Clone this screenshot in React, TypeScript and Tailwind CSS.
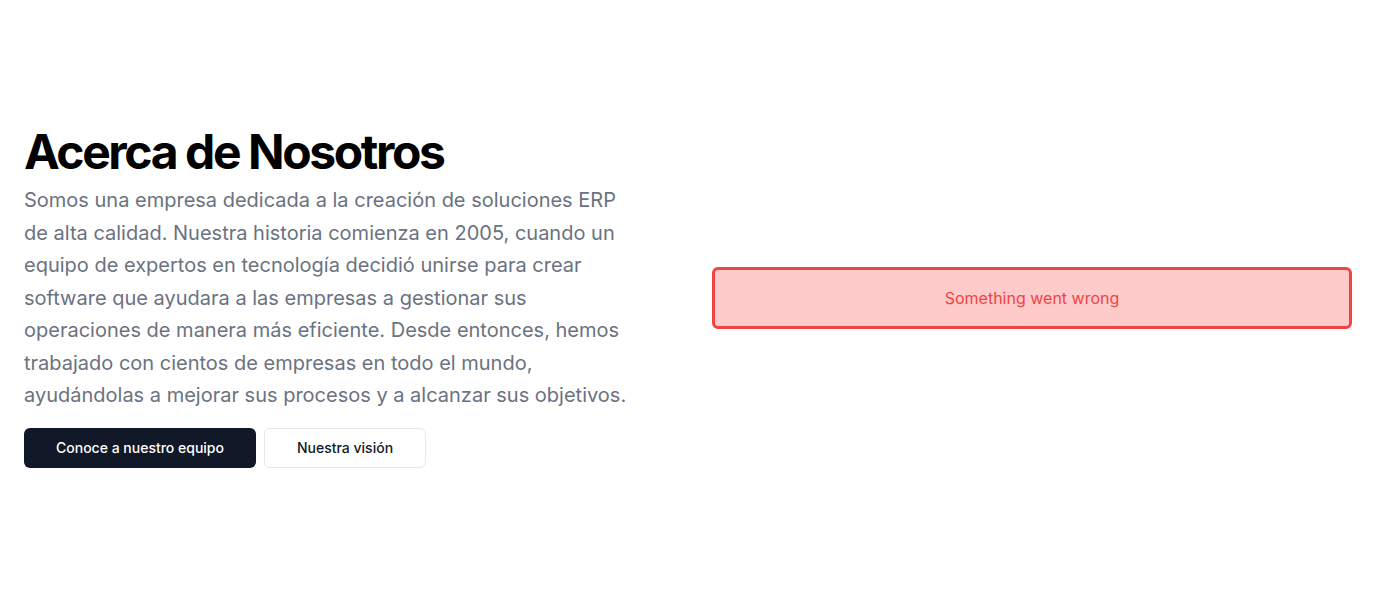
export default function App() {
  return (
    <div className="min-h-screen flex items-center bg-white font-['Inter',sans-serif]">
      <section className="w-full px-6">
        <div className="grid grid-cols-2 gap-12 items-center">
          <div className="flex flex-col justify-center space-y-4">
            <div className="space-y-2">
              <h1 className="text-5xl font-bold tracking-tighter text-black">Acerca de Nosotros</h1>
              <p className="max-w-[604px] text-xl leading-relaxed text-[#6b7280]">
                Somos una empresa dedicada a la creación de soluciones ERP de alta calidad. Nuestra historia
                comienza en 2005, cuando un equipo de expertos en tecnología decidió unirse para crear software
                que ayudara a las empresas a gestionar sus operaciones de manera más eficiente. Desde entonces,
                hemos trabajado con cientos de empresas en todo el mundo, ayudándolas a mejorar sus procesos y a
                alcanzar sus objetivos.
              </p>
            </div>
            <div className="flex flex-row gap-2">
              <button className="h-10 px-8 rounded-md bg-[#111827] text-white text-sm font-medium">
                Conoce a nuestro equipo
              </button>
              <button className="h-10 px-8 rounded-md border border-[#e5e7eb] bg-white text-[#111827] text-sm font-medium">
                Nuestra visión
              </button>
            </div>
          </div>
          <div className="p-4 border-[3px] border-[#ef4444] bg-[#fecaca] rounded-md text-center text-[#ef4444]">
            Something went wrong
          </div>
        </div>
      </section>
    </div>
  );
}
